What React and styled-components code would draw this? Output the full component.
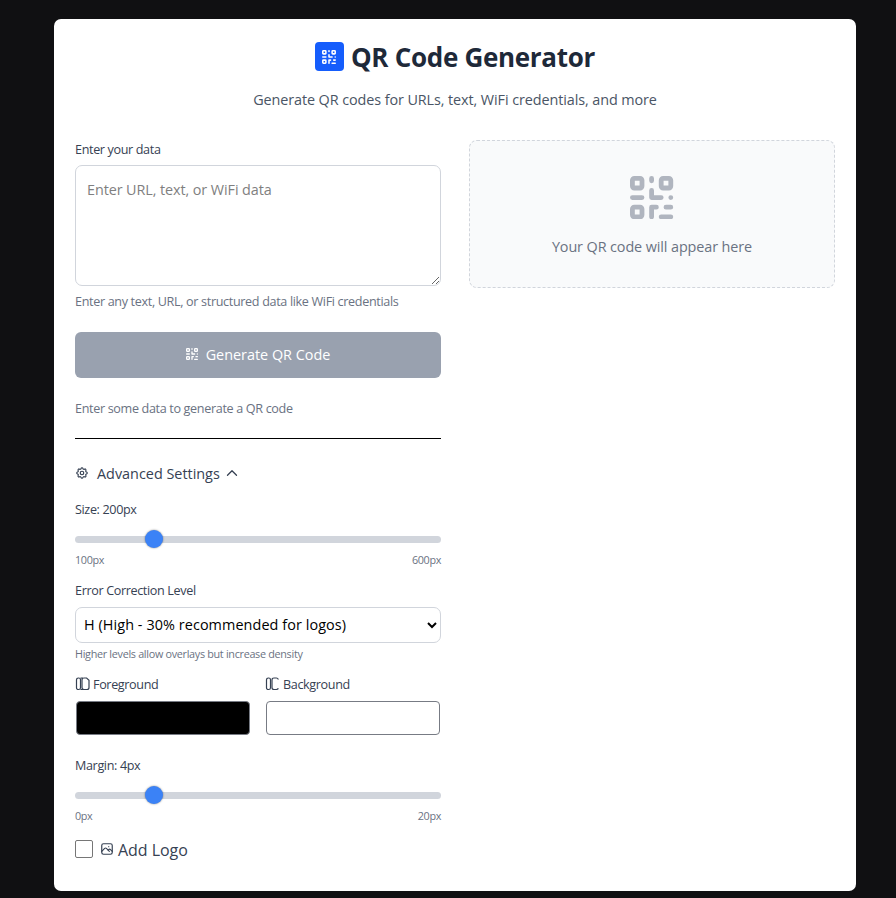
import React, { useState } from 'react';
import styled, { createGlobalStyle } from 'styled-components';
import { TbSettings, TbPhoto, TbChevronUp } from 'react-icons/tb';

const GlobalStyle = createGlobalStyle`
  * { box-sizing: border-box; }
  body {
    margin: 0;
    background: #101012;
    font-family: "Open Sans", "Noto Sans", sans-serif;
    color: #364153;
  }
`;
const Page = styled.main`
  display: flex;
  min-height: 898px;
  padding: 19px 40px 7px 54px;
`;
const Card = styled.section`
  flex: 1;
  padding: 23px 21px 0;
  border-radius: 7px;
  background: #fff;
`;
const Header = styled.header`
  display: flex;
  flex-direction: column;
  align-items: center;
  height: 98px;
`;
const TitleRow = styled.div`
  display: flex;
  align-items: center;
  gap: 7px;
  height: 29px;
`;
const Badge = styled.span`
  display: flex;
  align-items: center;
  justify-content: center;
  width: 29px;
  height: 29px;
  border-radius: 4px;
  background: #155dfc;
  color: #fff;
`;
const Title = styled.h1`
  margin: 0;
  font-size: 26px;
  font-weight: 700;
  line-height: 32px;
  letter-spacing: -0.3px;
  color: #1e2939;
  white-space: nowrap;
`;
const Text = styled.p`
  margin: ${({ $margin }) => $margin || 0};
  font-size: ${({ $size }) => $size || 12.6}px;
  line-height: 18px;
  letter-spacing: ${({ $spacing }) => $spacing || -0.34}px;
  color: ${({ $color }) => $color || '#6a7282'};
  white-space: nowrap;
`;
const Columns = styled.div`
  display: grid;
  grid-template-columns: 366px 366px;
  gap: 28px;
  align-items: start;
`;
const Form = styled.div`
  display: flex;
  flex-direction: column;
`;
const Label = styled.label`
  display: flex;
  align-items: center;
  gap: 3px;
  height: 18px;
  margin-top: ${({ $top }) => $top || 0}px;
  font-size: 12.6px;
  letter-spacing: -0.36px;
  color: #364153;
  white-space: nowrap;
`;
const TextArea = styled.textarea`
  display: block;
  width: 100%;
  height: 121px;
  margin-top: 7px;
  padding: 14px 11px;
  border: 1px solid #d1d5dc;
  border-radius: 7px;
  font: 14.4px/20px "Open Sans", sans-serif;
  letter-spacing: -0.09px;

  &::placeholder {
    color: #7f7f7f;
  }
`;
const GenerateButton = styled.button`
  display: flex;
  align-items: center;
  justify-content: center;
  gap: 8px;
  height: 46px;
  margin-top: 21px;
  padding: 0 0 2px;
  border: 0;
  border-radius: 6px;
  background: #99a1af;
  color: #fff;
  font: 14.4px "Open Sans", sans-serif;
  letter-spacing: 0;
`;
const Divider = styled.hr`
  width: 100%;
  height: 1px;
  margin: 20px 0 0;
  border: 0;
  background: #000;
`;
const AdvancedToggle = styled.button`
  display: flex;
  align-items: center;
  align-self: flex-start;
  height: 20px;
  margin: 24px 0 17px;
  padding: 0;
  border: 0;
  background: none;
  color: #364153;
  font: 14.4px "Open Sans", sans-serif;
  letter-spacing: 0;

  span {
    margin: 0 3px 0 8px;
  }
`;
const Range = styled.input`
  display: block;
  appearance: none;
  width: 100%;
  height: 7px;
  margin: 18px 0 0;
  border-radius: 4px;
  background: #d1d5dc;

  &::-webkit-slider-thumb {
    appearance: none;
    width: 18px;
    height: 18px;
    border-radius: 50%;
    background: #3b82f6;
    box-shadow: 0 0 2px rgba(0, 0, 0, 0.5);
    transform: translateY(-1px);
  }
`;
const RangeEnds = styled.div`
  display: flex;
  justify-content: space-between;
  height: 18px;
  margin-top: 8px;
  font-size: 10.8px;
  line-height: 18px;
  letter-spacing: -0.35px;
  color: #6a7282;
`;
const Select = styled.select`
  width: 100%;
  height: 36px;
  margin-top: 8px;
  padding: 0 3px 2px 4px;
  border: 1px solid #d1d5dc;
  border-radius: 7px;
  background: #fff;
  color: #000;
  font: 14.4px "Open Sans", sans-serif;
  letter-spacing: 0.08px;
`;
const ColorRow = styled.div`
  display: grid;
  grid-template-columns: 1fr 1fr;
  gap: 14px;
  margin-top: 12px;
`;
const ColorInput = styled.input`
  display: block;
  appearance: none;
  width: 100%;
  height: 36px;
  margin-top: 7px;
  padding: 1px;
  border: 0;
  background: none;

  &::-webkit-color-swatch-wrapper {
    padding: 0;
  }
  &::-webkit-color-swatch {
    border: 1px solid #777b84;
    border-radius: 4px;
  }
`;
const LogoRow = styled.label`
  display: flex;
  align-items: center;
  height: 20px;
  margin-top: 15px;
  font-size: 16px;
  letter-spacing: -0.05px;

  svg {
    margin-bottom: 2px;
  }
  span {
    margin-left: 4px;
  }
`;
const Checkbox = styled.input`
  appearance: none;
  width: 18px;
  height: 18px;
  margin: 0 7px 2px 0;
  border: 1px solid #767676;
  border-radius: 2px;
  background: #fff;
`;
const Preview = styled.div`
  display: flex;
  flex-direction: column;
  align-items: center;
  height: 148px;
  padding-top: 35px;
  border: 1px dashed #d1d5dc;
  border-radius: 8px;
  background: #f9fafb;
  color: #b0b5bf;
`;

const QrIcon = ({ size }) => (
  <svg width={size} height={size} viewBox="0 0 9 9" fill="none" stroke="currentColor" strokeLinecap="round" strokeLinejoin="round">
    <rect x=".5" y=".5" width="2" height="2" rx=".4" />
    <rect x="6.5" y=".5" width="2" height="2" rx=".4" />
    <rect x=".5" y="6.5" width="2" height="2" rx=".4" />
    <path d="M4.5 .5v.5M.5 4.5h2M4.5 3v1.5h2M8.5 4.5h.001M4.5 8.5v-2h1M7.5 6.5h1M6.5 8.5h2" />
  </svg>
);

const SwatchIcon = ({ open }) => (
  <svg width="15" height="14" viewBox="0 0 15 14" fill="none" stroke="currentColor" strokeWidth="1.2">
    <rect x="1.5" y="1" width="4" height="11.5" rx="1.8" />
    {open ? (
      <path d="M13.4 2.4Q12.8 1 11.4 1H9Q7 1 7 3v7.5Q7 12.5 9 12.5h2.4Q12.8 12.5 13.4 11.4" />
    ) : (
      <path d="M5.5 1H8M5.5 12.5H8M9 1h2.6L14 3.2v7.3Q14 12.5 12 12.5H9Q7 12.5 7 10.5V3Q7 1 9 1z" />
    )}
  </svg>
);

const App = () => {
  const [size, setSize] = useState(200);
  const [margin, setMargin] = useState(4);

  return (
    <Page>
      <GlobalStyle />
      <Card>
        <Header>
          <TitleRow>
            <Badge><QrIcon size={14} /></Badge>
            <Title>QR Code Generator</Title>
          </TitleRow>
          <Text $size={14.4} $spacing={-0.09} $margin="20px 0 0" $color="#4a5565">
            Generate QR codes for URLs, text, WiFi credentials, and more
          </Text>
        </Header>
        <Columns>
          <Form>
            <Label>Enter your data</Label>
            <TextArea placeholder="Enter URL, text, or WiFi data" />
            <Text $margin="7px 0 0">Enter any text, URL, or structured data like WiFi credentials</Text>
            <GenerateButton type="button">
              <QrIcon size={12} />
              Generate QR Code
            </GenerateButton>
            <Text $margin="22px 0 0">Enter some data to generate a QR code</Text>
            <Divider />
            <AdvancedToggle type="button">
              <TbSettings size={14} />
              <span>Advanced Settings</span>
              <TbChevronUp size={18} strokeWidth={1.7} />
            </AdvancedToggle>
            <Label>Size: {size}px</Label>
            <Range type="range" min="100" max="600" value={size} onChange={(e) => setSize(e.target.value)} />
            <RangeEnds><span>100px</span><span>600px</span></RangeEnds>
            <Label $top={12}>Error Correction Level</Label>
            <Select defaultValue="H">
              <option value="H">H (High - 30% recommended for logos)</option>
            </Select>
            <Text $size={10.8} $spacing={-0.3} $margin="2px 0 0">Higher levels allow overlays but increase density</Text>
            <ColorRow>
              <div>
                <Label><SwatchIcon />Foreground</Label>
                <ColorInput type="color" defaultValue="#000000" />
              </div>
              <div>
                <Label><SwatchIcon open />Background</Label>
                <ColorInput type="color" defaultValue="#ffffff" />
              </div>
            </ColorRow>
            <Label $top={20}>Margin: {margin}px</Label>
            <Range type="range" min="0" max="20" value={margin} onChange={(e) => setMargin(e.target.value)} />
            <RangeEnds><span>0px</span><span>20px</span></RangeEnds>
            <LogoRow>
              <Checkbox type="checkbox" />
              <TbPhoto size={14} />
              <span>Add Logo</span>
            </LogoRow>
          </Form>
          <Preview>
            <QrIcon size={43.2} />
            <Text $size={14.4} $spacing={-0.1} $margin="19px 0 0">Your QR code will appear here</Text>
          </Preview>
        </Columns>
      </Card>
    </Page>
  );
};

export default App;
